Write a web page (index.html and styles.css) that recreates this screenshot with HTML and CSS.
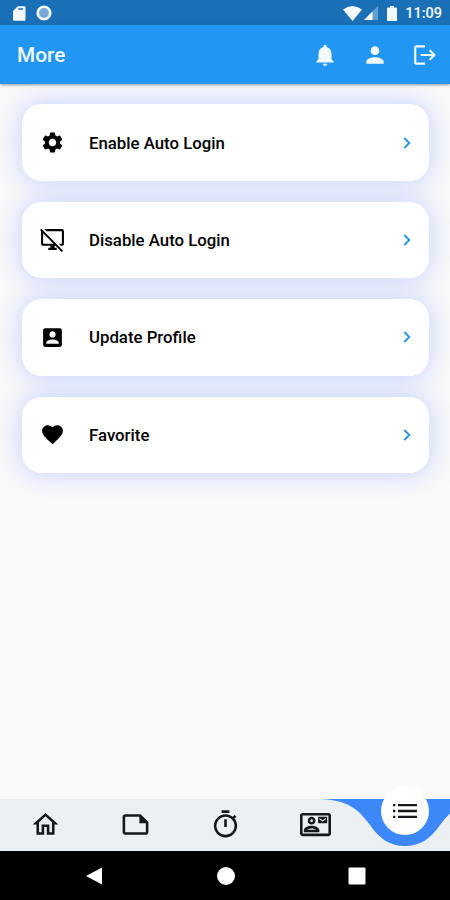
FILE: index.html
```html
<!DOCTYPE html>
<html lang="en">
<head>
  <meta charset="UTF-8">
  <title>More</title>
  <meta name="viewport" content="width=device-width, initial-scale=1.0" />
  <link rel="stylesheet" href="styles.css">
</head>
<body>
  <div class="status-bar">
    <svg class="sd-icon" viewBox="0 0 13 15"><path fill-rule="evenodd" d="M5 0h7q1 0 1 1v13q0 1-1 1H1q-1 0-1-1V5zM5.500 2v1.600h5V2z"/></svg>
    <svg class="sync-icon" viewBox="0 0 16 16"><circle cx="8" cy="8" r="6.300" fill="#79a9d8" stroke="#f3f9ff" stroke-width="2.600"/></svg>
    <div class="status-right">
      <svg class="wifi-icon" viewBox="0 0 19 15"><path d="M0 3.500Q9.500-3.500 19 3.500L9.500 15z"/></svg>
      <svg class="signal-icon" viewBox="0 0 14 14"><path d="M14 0v14H0z" opacity=".35"/><path d="M8.500 5.500V14H0z"/></svg>
      <svg class="battery-icon" viewBox="0 0 10 15"><path d="M3 0h4v1.500h2q1 0 1 1V14q0 1-1 1H1q-1 0-1-1V2.500q0-1 1-1h2z"/></svg>
      <span class="time">11:09</span>
    </div>
  </div>

  <header class="app-bar">
    <h1>More</h1>
    <div class="actions">
      <svg viewBox="0 0 24 24"><path d="M12 22c1.100 0 2-.9 2-2h-4c0 1.100.89 2 2 2zm6-6v-5c0-3.070-1.640-5.640-4.500-6.320V4c0-.83-.67-1.500-1.500-1.500s-1.500.67-1.500 1.500v.68C7.630 5.360 6 7.920 6 11v5l-2 2v1h16v-1l-2-2z"/></svg>
      <svg viewBox="0 0 24 24"><path d="M12 12c2.210 0 4-1.790 4-4s-1.790-4-4-4-4 1.790-4 4 1.790 4 4 4zm0 2c-2.670 0-8 1.340-8 4v2h16v-2c0-2.660-5.330-4-8-4z"/></svg>
      <svg viewBox="0 0 24 24"><path d="M17 7l-1.410 1.410L18.170 11H8v2h10.170l-2.580 2.580L17 17l5-5-5-5zM4 5h8V3H4c-1.100 0-2 .9-2 2v14c0 1.100.9 2 2 2h8v-2H4V5z"/></svg>
    </div>
  </header>

  <main class="menu">
    <a class="card">
      <svg class="card-icon" viewBox="0 0 24 24"><path d="M19.140 12.940c.04-.3.060-.61.060-.94 0-.32-.02-.64-.07-.94l2.030-1.580c.18-.14.230-.41.120-.61l-1.920-3.320c-.12-.22-.37-.29-.59-.22l-2.390.96c-.5-.38-1.030-.7-1.620-.94l-.36-2.540c-.04-.24-.24-.41-.48-.41h-3.840c-.24 0-.43.17-.47.41l-.36 2.540c-.59.24-1.130.57-1.620.94l-2.390-.96c-.22-.08-.47 0-.59.22L2.740 8.870c-.12.21-.08.47.12.61l2.030 1.580c-.05.3-.09.63-.09.94s.02.64.07.94l-2.030 1.580c-.18.14-.23.41-.12.61l1.920 3.320c.12.22.37.29.59.22l2.390-.96c.5.38 1.030.7 1.620.94l.36 2.540c.05.24.24.41.48.41h3.840c.24 0 .44-.17.47-.41l.36-2.540c.59-.24 1.130-.56 1.620-.94l2.390.96c.22.08.47 0 .59-.22l1.920-3.320c.12-.22.070-.47-.12-.61l-2.010-1.580zM12 15.600c-1.980 0-3.600-1.620-3.600-3.600s1.620-3.600 3.600-3.600 3.600 1.620 3.600 3.600-1.620 3.600-3.600 3.600z"/></svg>
      <span>Enable Auto Login</span>
      <svg class="chevron" viewBox="0 0 8 12"><path d="M1.300 1L6.300 6l-5 5"/></svg>
    </a>
    <a class="card">
      <svg class="card-icon" viewBox="0 0 24 24"><path d="M23 16c0 1.100-.9 2-2 2h-1l-2-2h3V4H6L4 2h17c1.100 0 2 .9 2 2v12zm-5.500 2l-2-2zm-2.600 0l6 6 1.300-1.300L2.500 2.900 1.200 1.600 0 2.900l1 1V16c0 1.100.9 2 2 2h7v2H8v2h8v-2h-2v-2h.9zM3 16V5.900L13.100 16H3z"/></svg>
      <span>Disable Auto Login</span>
      <svg class="chevron" viewBox="0 0 8 12"><path d="M1.300 1L6.300 6l-5 5"/></svg>
    </a>
    <a class="card">
      <svg class="card-icon" viewBox="0 0 24 24"><path d="M3 5v14c0 1.100.89 2 2 2h14c1.100 0 2-.9 2-2V5c0-1.100-.9-2-2-2H5c-1.110 0-2 .9-2 2zm12 4c0 1.660-1.340 3-3 3s-3-1.340-3-3 1.340-3 3-3 3 1.340 3 3zm-9 8c0-2 4-3.100 6-3.100s6 1.100 6 3.100v1H6v-1z"/></svg>
      <span>Update Profile</span>
      <svg class="chevron" viewBox="0 0 8 12"><path d="M1.300 1L6.300 6l-5 5"/></svg>
    </a>
    <a class="card">
      <svg class="card-icon" viewBox="0 0 24 24"><path d="M12 21.350l-1.450-1.320C5.400 15.360 2 12.280 2 8.500 2 5.420 4.420 3 7.500 3c1.740 0 3.410.81 4.500 2.090C13.090 3.810 14.760 3 16.500 3 19.580 3 22 5.420 22 8.500c0 3.780-3.400 6.860-8.550 11.540L12 21.350z"/></svg>
      <span>Favorite</span>
      <svg class="chevron" viewBox="0 0 8 12"><path d="M1.300 1L6.300 6l-5 5"/></svg>
    </a>
  </main>

  <nav class="bottom-nav">
    <a class="nav-item"><svg viewBox="0 0 24 24"><path d="M12 5.690l5 4.500V18h-2v-6H9v6H7v-7.810l5-4.500M12 3L2 12h3v8h6v-6h2v6h6v-8h3L12 3z"/></svg></a>
    <a class="nav-item"><svg viewBox="0 0 24 24"><path d="M16 4H4c-1.100 0-2 .9-2 2v12.010c0 1.100.9 1.990 2 1.990h16c1.100 0 2-.9 2-2v-8l-6-6zM4 18.010V6h11v5h5v7.010H4z"/></svg></a>
    <a class="nav-item"><svg viewBox="0 0 24 24"><path d="M15 1H9v2h6V1zm-4 13h2V8h-2v6zm8.030-6.610l1.420-1.420c-.43-.51-.9-.99-1.410-1.410l-1.420 1.420C16.070 4.740 14.120 4 12 4c-4.970 0-9 4.030-9 9s4.020 9 9 9 9-4.030 9-9c0-2.120-.74-4.070-1.970-5.610zM12 20c-3.870 0-7-3.130-7-7s3.130-7 7-7 7 3.130 7 7-3.130 7-7 7z"/></svg></a>
    <a class="nav-item"><svg viewBox="0 0 24 24"><path fill-rule="evenodd" d="M22 3H2C.9 3 0 3.900 0 5v14c0 1.100.9 2 2 2h20c1.100 0 2-.9 2-2V5c0-1.100-.9-2-2-2zM2 19V5h20v14zM21 6h-7v5h7V6zm-1 2l-2.500 1.750L15 8V7l2.500 1.750L20 7v1zM9 12c1.650 0 3-1.350 3-3s-1.350-3-3-3-3 1.350-3 3 1.350 3 3 3zm0-4c.55 0 1 .45 1 1s-.45 1-1 1-1-.45-1-1 .45-1 1-1zm6 8.590c0-2.500-3.970-3.580-6-3.580s-6 1.080-6 3.580V18h12v-1.410zM5.480 16c.74-.5 2.220-1 3.520-1s2.770.49 3.520 1H5.480z"/></svg></a>
    <a class="nav-item active">
      <svg class="wave" viewBox="0 0 130 53"><path d="M0 0C28 1 38 10 50 26C59 39 69 47 85 47S111 39 120 26Q125 19 130 14.500V0z"/></svg>
      <span class="bubble">
        <svg viewBox="0 0 24 14"><path d="M0 0h2.300v2.300H0zM5 0h19v2.300H5zM0 5.850h2.300v2.300H0zM5 5.850h19v2.300H5zM0 11.700h2.300V14H0zM5 11.700h19V14H5z"/></svg>
      </span>
    </a>
  </nav>

  <div class="system-nav">
    <svg viewBox="0 0 18 18"><path d="M17 .5v17L1 9z"/></svg>
    <svg viewBox="0 0 18 18"><circle cx="9" cy="9" r="9"/></svg>
    <svg viewBox="0 0 18 18"><rect x=".5" y=".5" width="17" height="17" rx="1"/></svg>
  </div>
</body>
</html>
```
FILE: styles.css
```css
* {
  box-sizing: border-box;
}

body {
  margin: 0;
  height: 900px;
  display: flex;
  flex-direction: column;
  overflow: hidden;
  font-family: Roboto, "Liberation Sans", sans-serif;
  background: #fafafa;
  color: #000;
}

svg {
  display: block;
  flex: none;
}

/* status bar */
.status-bar {
  height: 25px;
  padding: 1px 8px 0 13px;
  display: flex;
  align-items: center;
  background: #1a70b7;
  color: #f3f9ff;
  fill: #f3f9ff;
}

.sd-icon {
  width: 12.5px;
  height: 15px;
}

.sync-icon {
  width: 16px;
  height: 16px;
  margin-left: 10.5px;
}

.status-right {
  margin-left: auto;
  display: flex;
  align-items: center;
}

.wifi-icon {
  width: 19px;
  height: 15px;
}

.signal-icon {
  width: 14px;
  height: 14px;
  margin-left: 2px;
}

.battery-icon {
  width: 10px;
  height: 15px;
  margin-left: 9px;
}

.time {
  margin-left: 8px;
  font-size: 14.5px;
  font-weight: 500;
}

/* app bar */
.app-bar {
  position: relative;
  height: 58.5px;
  padding: 2px 12px 0 17px;
  display: flex;
  align-items: center;
  justify-content: space-between;
  background: #2196f3;
  color: #f3faff;
  box-shadow: 0 1px 3px rgba(0, 0, 0, 0.4);
  z-index: 1;
}

.app-bar h1 {
  margin: 0;
  font-size: 20.8px;
  font-weight: 500;
}

.actions {
  display: flex;
  gap: 24px;
  fill: #f3faff;
}

.actions svg {
  width: 26px;
  height: 26px;
}

/* cards */
.menu {
  flex: 1;
  padding: 20.9px 21px 0 21.5px;
  display: flex;
  flex-direction: column;
  gap: 21px;
}

.card {
  position: relative;
  height: 76.4px;
  padding: 0 18px 0 18.5px;
  display: flex;
  align-items: center;
  border-radius: 20px;
  background: #fff;
  font-size: 16.8px;
  font-weight: 500;
}

/* glow sits below every card so neighbours stay white */
.card::before {
  content: "";
  position: absolute;
  inset: 0;
  z-index: -1;
  border-radius: 20px;
  box-shadow: 0 0 26px 2px rgba(182, 198, 255, 0.75);
}

.card-icon {
  width: 25px;
  height: 25px;
  margin-right: 24px;
}

.chevron {
  width: 8px;
  height: 12px;
  margin-left: auto;
  fill: none;
  stroke: #2c93e0;
  stroke-width: 1.9;
}

/* bottom navigation */
.bottom-nav {
  height: 52.5px;
  display: grid;
  grid-template-columns: repeat(5, 1fr);
  background: #ecf0f3;
}

.nav-item {
  display: flex;
  align-items: center;
  justify-content: center;
  fill: #15191c;
}

.nav-item > svg {
  width: 31px;
  height: 31px;
}

.nav-item.active {
  position: relative;
}

.nav-item .wave {
  position: absolute;
  top: 0;
  left: -40px;
  width: 130px;
  height: 53px;
  fill: #3d88f8;
}

.bubble {
  position: relative;
  top: -13.5px;
  width: 48px;
  height: 48px;
  display: flex;
  align-items: center;
  justify-content: center;
  border-radius: 50%;
  background: #fff;
}

.bubble svg {
  width: 24px;
  height: 14px;
}

/* system navigation */
.system-nav {
  height: 49px;
  padding: 0 84px 0 85px;
  display: flex;
  align-items: center;
  justify-content: space-between;
  background: #000;
  fill: #fff;
}

.system-nav svg {
  width: 18px;
  height: 18px;
}
```
